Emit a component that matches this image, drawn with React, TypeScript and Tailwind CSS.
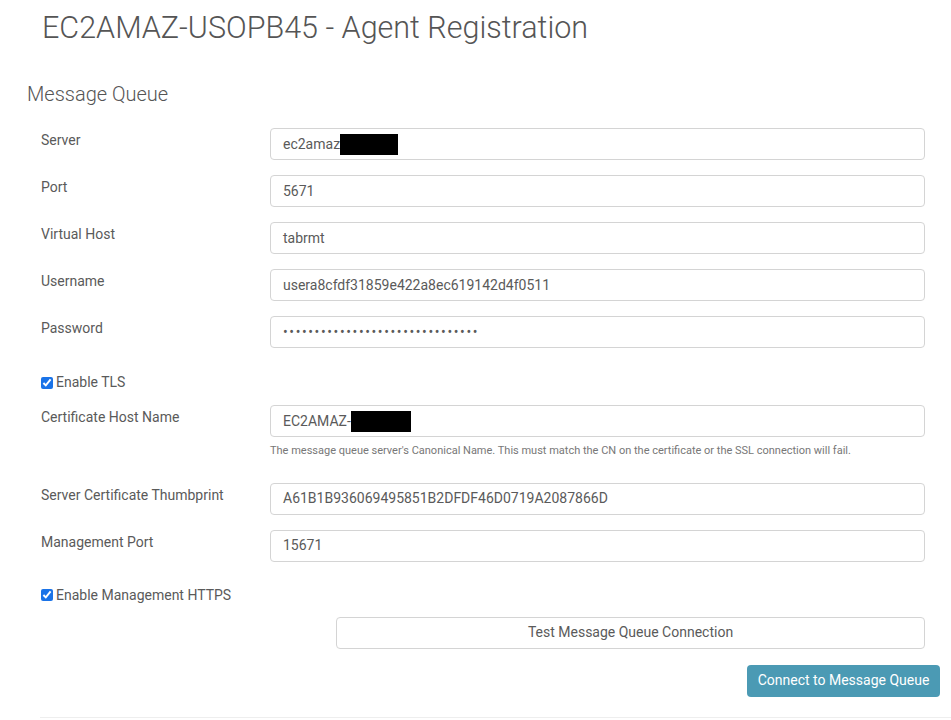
import React from 'react';

const font = { fontFamily: 'Roboto, "Liberation Sans", sans-serif' };

function Field({ label, value, redact, mb = 'mb-[15px]', dots }: { label: string; value: string; redact?: boolean; mb?: string; dots?: boolean }) {
  return (
    <div className={`flex ${mb}`}>
      <div className="w-[229px] pt-[2px] text-[14px] text-[#5a5a5a]">{label}</div>
      <div className="flex-1 h-[32px] border border-[#d4d4d4] rounded-[4px] bg-white flex items-center px-[12px] text-[14px] text-[#5a5a5a]">
        <span className={dots ? 'tracking-[1.6px]' : ''}>{value}</span>
        {redact && <span className="inline-block bg-black w-[58px] h-[21px]" />}
      </div>
    </div>
  );
}

function Check({ label }: { label: string }) {
  return (
    <label className="flex items-center gap-[3px] text-[14px] text-[#5a5a5a]">
      <input type="checkbox" defaultChecked className="w-[12px] h-[12px] accent-[#1a73e8] m-0" />
      <span>{label}</span>
    </label>
  );
}

export default function App() {
  return (
    <div className="bg-white w-[951px] h-[720px] overflow-hidden" style={font}>
      <h1 className="pl-[42px] pt-[8px] text-[30.5px] font-light text-[#555] leading-[40px]">EC2AMAZ-USOPB45 - Agent Registration</h1>
      <h2 className="pl-[27px] mt-[32px] text-[20px] font-light text-[#555] leading-[28px]">Message Queue</h2>
      <div className="pl-[41px] pr-[26px] mt-[20px]">
        <Field label="Server" value="ec2amaz" redact />
        <Field label="Port" value="5671" />
        <Field label="Virtual Host" value="tabrmt" />
        <Field label="Username" value="usera8cfdf31859e422a8ec619142d4f0511" />
        <Field label="Password" value="•••••••••••••••••••••••••••••••" mb="mb-[24px]" dots />
        <Check label="Enable TLS" />
        <div className="mt-[12px]">
          <div className="flex">
            <div className="w-[229px] pt-[2px] text-[14px] text-[#5a5a5a]">Certificate Host Name</div>
            <div className="flex-1">
              <div className="h-[32px] border border-[#d4d4d4] rounded-[4px] flex items-center px-[12px] text-[14px] text-[#5a5a5a]">
                <span>EC2AMAZ-</span>
                <span className="inline-block bg-black w-[60px] h-[21px]" />
              </div>
              <div className="mt-[6px] text-[11px] text-[#777]">The message queue server's Canonical Name. This must match the CN on the certificate or the SSL connection will fail.</div>
            </div>
          </div>
        </div>
        <div className="mt-[23px]">
          <Field label="Server Certificate Thumbprint" value="A61B1B936069495851B2DFDF46D0719A2087866D" />
          <Field label="Management Port" value="15671" mb="mb-[23px]" />
        </div>
        <Check label="Enable Management HTTPS" />
        <div className="flex justify-end mt-[11px]">
          <button className="w-[589px] h-[32px] border border-[#d4d4d4] rounded-[4px] bg-white text-[14px] text-[#5a5a5a]">Test Message Queue Connection</button>
        </div>
        <div className="flex justify-end mt-[16px] -mr-[15px]">
          <button className="w-[193px] h-[32px] rounded-[4px] bg-[#4b9ab4] text-[14px] text-white">Connect to Message Queue</button>
        </div>
      </div>
      <div className="ml-[40px] mt-[20px] border-t border-[#eee]" />
    </div>
  );
}
